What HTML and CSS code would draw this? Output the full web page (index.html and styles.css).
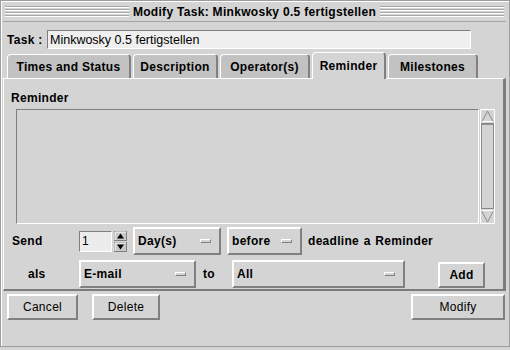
FILE: index.html
```html
<!DOCTYPE html>
<html>
  <head>
    <title>Modify Task</title>
    <meta name="viewport" content="width=device-width, initial-scale=1" />
    <link rel="stylesheet" href="styles.css">
  </head>
  <body>
    <div class="window">
      <div class="titlebar">
        <span class="grip"></span>
        <span class="title">Modify Task: Minkwosky 0.5 fertigstellen</span>
        <span class="grip"></span>
      </div>

      <div class="task-row">
        <label for="task">Task :</label>
        <input type="text" id="task" value="Minkwosky 0.5 fertigstellen" />
      </div>

      <div class="tabs">
        <div class="tab tab-times">Times and Status</div>
        <div class="tab tab-desc">Description</div>
        <div class="tab tab-oper">Operator(s)</div>
        <div class="tab tab-rem active">Reminder</div>
        <div class="tab tab-mile">Milestones</div>
      </div>

      <div class="panel">
        <div class="panel-heading">Reminder</div>

        <div class="list-row">
          <div class="list-box"></div>
          <svg class="scrollbar" width="15" height="115" viewBox="0 0 15 115">
            <path d="M0.5 114.5V0.5H14.5" stroke="#ffffff" fill="none" />
            <path d="M14.5 0.5V114.5H0.5" stroke="#ffffff" fill="none" />
            <polyline points="2,12.5 7.5,2 13,12.5" stroke="#8c8c8c" fill="none" />
            <line x1="2" y1="12.5" x2="13" y2="12.5" stroke="#ffffff" />
            <line x1="1" y1="14.5" x2="14" y2="14.5" stroke="#8c8c8c" />
            <rect x="1.5" y="15.5" width="12" height="84" stroke="#8c8c8c" fill="none" />
            <line x1="2" y1="101.5" x2="13" y2="101.5" stroke="#ffffff" />
            <polyline points="2,102.5 7.5,113 13,102.5" stroke="#8c8c8c" fill="none" />
          </svg>
        </div>

        <div class="form-row send-row">
          <span class="row-label">Send</span>
          <input type="text" class="spin-field" value="1" />
          <svg class="spin-arrows" width="13" height="21" viewBox="0 0 13 21">
            <rect x="0.5" y="0.5" width="12" height="9" fill="#c8c8c8" stroke="#808080" />
            <path d="M1 9V1H12" stroke="#ffffff" fill="none" />
            <polygon points="3,7.5 10,7.5 6.5,2.5" fill="#000000" />
            <rect x="0.5" y="11.5" width="12" height="9" fill="#c8c8c8" stroke="#808080" />
            <path d="M1 20V12H12" stroke="#ffffff" fill="none" />
            <polygon points="3,13.5 10,13.5 6.5,18.5" fill="#000000" />
          </svg>
          <div class="option-menu menu-unit">Day(s)<span class="indicator"></span></div>
          <div class="option-menu menu-when">before<span class="indicator"></span></div>
          <span class="row-text">deadline a Reminder</span>
        </div>

        <div class="form-row als-row">
          <span class="row-label als-label">als</span>
          <div class="option-menu menu-via">E-mail<span class="indicator"></span></div>
          <span class="row-text to-text">to</span>
          <div class="option-menu menu-who">All<span class="indicator"></span></div>
          <button class="add-button">Add</button>
        </div>
      </div>

      <div class="actions">
        <button class="btn btn-cancel">Cancel</button>
        <button class="btn btn-delete">Delete</button>
        <button class="btn btn-modify">Modify</button>
      </div>
    </div>
  </body>
</html>
```

FILE: styles.css
```css
/* Base */
* {
  box-sizing: border-box;
}

body {
  margin: 0;
  background-color: #d4d4d4;
  font-family: "Liberation Sans", Arial, sans-serif;
  font-size: 12px;
  color: #000;
}

.window {
  width: 510px;
  height: 347px;
  display: flex;
  flex-direction: column;
  border: 1px solid #9c9c9c;
  box-shadow: inset 1px 1px 0 #ffffff;
  padding: 1px 3px 0 2px;
}

/* Title bar */
.titlebar {
  height: 20px;
  display: flex;
  align-items: center;
  gap: 4px;
  padding: 0 2px;
  border-bottom: 1px solid #a4a4a4;
}

.grip {
  flex: 1;
  height: 11px;
  background: repeating-linear-gradient(
    to bottom,
    #a8a8a8 0 1px,
    #ffffff 1px 2px,
    transparent 2px 3px
  );
}

.title {
  font-weight: bold;
  letter-spacing: 0.3px;
}

/* Task row */
.task-row {
  display: flex;
  align-items: center;
  margin-top: 8px;
  padding-left: 4px;
}

.task-row label {
  width: 40px;
  font-weight: bold;
  letter-spacing: 0.3px;
}

.task-row input {
  width: 424px;
  height: 19px;
  margin: 0;
  padding: 0 2px;
  background-color: #efefef;
  border: 1px solid;
  border-color: #808080 #ffffff #ffffff #808080;
  font-family: "Liberation Sans", Arial, sans-serif;
  font-size: 12.5px;
  color: #000;
  outline: none;
}

/* Tabs */
.tabs {
  height: 25px;
  margin-top: 4px;
  padding-left: 4px;
  display: flex;
  align-items: flex-end;
  gap: 2px;
}

.tab {
  height: 24px;
  display: flex;
  align-items: center;
  justify-content: center;
  background-color: #c2c2c2;
  border-top: 1px solid #ffffff;
  border-left: 1px solid #ffffff;
  border-right: 2px solid #808080;
  border-radius: 4px 4px 0 0;
  font-weight: bold;
  letter-spacing: 0.3px;
}

.tab.active {
  height: 27px;
  margin-bottom: -1px;
  background-color: #d4d4d4;
  position: relative;
  z-index: 1;
}

.tab-times { width: 124px; }
.tab-desc { width: 85px; }
.tab-oper { width: 90px; }
.tab-rem { width: 74px; }
.tab-mile { width: 90px; }

/* Panel */
.panel {
  height: 213px;
  display: flex;
  flex-direction: column;
  border-top: 1px solid #ffffff;
  border-left: 1px solid #ffffff;
  border-right: 3px solid #7c7c7c;
  border-bottom: 2px solid #7c7c7c;
}

.panel-heading {
  margin: 12px 0 0 7px;
  line-height: 14px;
  font-weight: bold;
  letter-spacing: 0.3px;
}

.list-row {
  display: flex;
  gap: 1px;
  margin: 4px 0 0 12px;
}

.list-box {
  width: 463px;
  height: 115px;
  border: 1px solid;
  border-color: #808080 #ffffff #ffffff #808080;
}

.scrollbar {
  display: block;
}

/* Reminder form rows */
.form-row {
  display: flex;
  align-items: center;
  padding-left: 8px;
  font-weight: bold;
  letter-spacing: 0.3px;
}

.send-row {
  height: 28px;
  margin-top: 3px;
}

.als-row {
  height: 29px;
  margin-top: 4px;
}

.row-label {
  width: 67px;
}

.als-label {
  padding-left: 16px;
}

.spin-field {
  width: 33px;
  height: 21px;
  margin: 0;
  padding: 0 2px;
  background-color: #ececec;
  border: 1px solid;
  border-color: #808080 #ffffff #ffffff #808080;
  font-family: "Liberation Sans", Arial, sans-serif;
  font-size: 12px;
  color: #000;
  outline: none;
}

.spin-arrows {
  display: block;
  margin-left: 2px;
}

.option-menu {
  height: 28px;
  display: flex;
  align-items: center;
  justify-content: space-between;
  padding: 0 8px 0 3px;
  border: 2px solid;
  border-color: #ffffff #808080 #808080 #ffffff;
}

.indicator {
  width: 11px;
  height: 4px;
  border: 1px solid;
  border-color: #ffffff #808080 #808080 #ffffff;
}

.menu-unit {
  width: 88px;
  margin-left: 6px;
}

.menu-when {
  width: 75px;
  margin-left: 6px;
}

.menu-via {
  width: 117px;
}

.menu-who {
  width: 173px;
}

.row-text {
  margin-left: 6px;
  word-spacing: 1px;
}

.to-text {
  width: 29px;
  margin-left: 7px;
}

.add-button {
  width: 47px;
  height: 26px;
  margin: 3px 0 0 33px;
  padding: 0;
  background-color: #d4d4d4;
  border: 2px solid;
  border-color: #ffffff #808080 #808080 #ffffff;
  font-family: "Liberation Sans", Arial, sans-serif;
  font-size: 12px;
  font-weight: bold;
  letter-spacing: 0.3px;
  color: #000;
}

/* Bottom buttons */
.actions {
  display: flex;
  margin-top: 3px;
  padding-left: 4px;
}

.btn {
  height: 26px;
  padding: 0;
  background-color: #d4d4d4;
  border: 2px solid;
  border-color: #ffffff #808080 #808080 #ffffff;
  font-family: "Liberation Sans", Arial, sans-serif;
  font-size: 12px;
  letter-spacing: 0.3px;
  color: #000;
}

.btn-cancel {
  width: 71px;
}

.btn-delete {
  width: 68px;
  margin-left: 14px;
}

.btn-modify {
  width: 94px;
  margin-left: auto;
  margin-right: 1px;
}
```
